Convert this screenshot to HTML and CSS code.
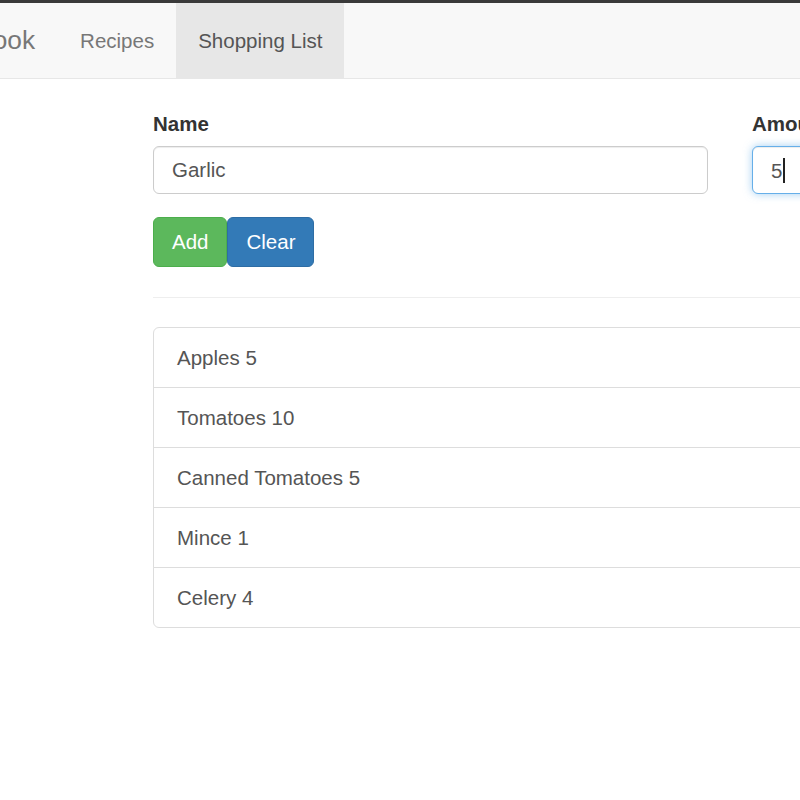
FILE: index.html
```html
<!DOCTYPE html>
<html>
<head>
<meta charset="utf-8">
<link rel="stylesheet" href="styles.css">
</head>
<body>
<div class="topline"></div>
<nav class="navbar">
  <a class="brand">Recipe Book</a>
  <ul class="nav">
    <li><a>Recipes</a></li>
    <li class="active"><a>Shopping List</a></li>
  </ul>
</nav>
<main class="content">
  <form class="form">
    <div class="row">
      <div class="group name-col">
        <label class="label">Name</label>
        <input class="control" type="text" value="Garlic">
      </div>
      <div class="group amount-col">
        <label class="label">Amount</label>
        <div class="control focused"><span class="val">5</span><span class="caret"></span></div>
      </div>
    </div>
    <div class="buttons">
      <button type="button" class="btn btn-success">Add</button><button type="button" class="btn btn-primary">Clear</button>
    </div>
  </form>
  <hr class="divider">
  <ul class="list">
    <li class="item">Apples 5</li>
    <li class="item">Tomatoes 10</li>
    <li class="item">Canned Tomatoes 5</li>
    <li class="item">Mince 1</li>
    <li class="item">Celery 4</li>
  </ul>
</main>
</body>
</html>
```
FILE: styles.css
```css
html, body {
  margin: 0;
  padding: 0;
  overflow: hidden;
  background: #fff;
}
body {
  font-family: "Liberation Sans", Arial, sans-serif;
  font-size: 20.5px;
  line-height: 29px;
  color: #333;
  width: 800px;
}
.topline {
  height: 3px;
  background: #3a3a3a;
}
.navbar {
  display: flex;
  height: 75px;
  background: #f8f8f8;
  border-bottom: 1px solid #e7e7e7;
  margin-left: -136px;
  width: 1200px;
}
.brand {
  display: block;
  padding: 0 22px 0 22px;
  font-size: 26.3px;
  line-height: 75px;
  color: #777;
  height: 75px;
}
.nav {
  display: flex;
  list-style: none;
  margin: 0 0 0 1px;
  padding: 0;
}
.nav li a {
  display: block;
  padding: 0 22px;
  line-height: 75px;
  color: #777;
}
.nav li.active a {
  background: #e7e7e7;
  color: #555;
}
.content {
  padding: 30px 0 0 153px;
  width: 1400px;
}
.row {
  display: flex;
  gap: 44px;
}
.group {
  display: flex;
  flex-direction: column;
  margin-bottom: 23px;
}
.name-col { width: 555px; }
.amount-col { width: 196px; }
.label {
  font-weight: bold;
  margin-bottom: 8px;
  line-height: 29px;
}
.control {
  box-sizing: border-box;
  height: 48px;
  width: 100%;
  padding: 0 18px;
  font-family: "Liberation Sans", Arial, sans-serif;
  font-size: 20.5px;
  color: #555;
  background: #fff;
  border: 1px solid #ccc;
  border-radius: 6px;
  box-shadow: inset 0 1px 1px rgba(0,0,0,.075);
  outline: none;
}
.focused {
  display: flex;
  align-items: center;
  border-color: #66afe9;
  box-shadow: inset 0 1px 1px rgba(0,0,0,.075), 0 0 8px rgba(102,175,233,.6);
}
.caret {
  display: inline-block;
  width: 2px;
  height: 25px;
  background: #222;
  margin-left: 1px;
}
.buttons {
  display: flex;
}
.btn {
  font-family: "Liberation Sans", Arial, sans-serif;
  font-size: 20.5px;
  line-height: 30px;
  padding: 9px 18px;
  color: #fff;
  border: 1px solid transparent;
  border-radius: 6px;
  cursor: pointer;
  margin: 0;
}
.btn-success {
  background: #5cb85c;
  border-color: #4cae4c;
}
.btn-primary {
  background: #337ab7;
  border-color: #2e6da4;
}
.divider {
  margin: 30px 0 29px 0;
  border: 0;
  border-top: 1px solid #eee;
  height: 0;
}
.list {
  list-style: none;
  margin: 0;
  padding: 0;
}
.item {
  padding: 15px 23px;
  line-height: 29px;
  color: #555;
  border: 1px solid #ddd;
  margin-bottom: -1px;
  background: #fff;
}
.item:first-child {
  border-radius: 6px 6px 0 0;
}
.item:last-child {
  border-radius: 0 0 6px 6px;
  margin-bottom: 0;
}
```
